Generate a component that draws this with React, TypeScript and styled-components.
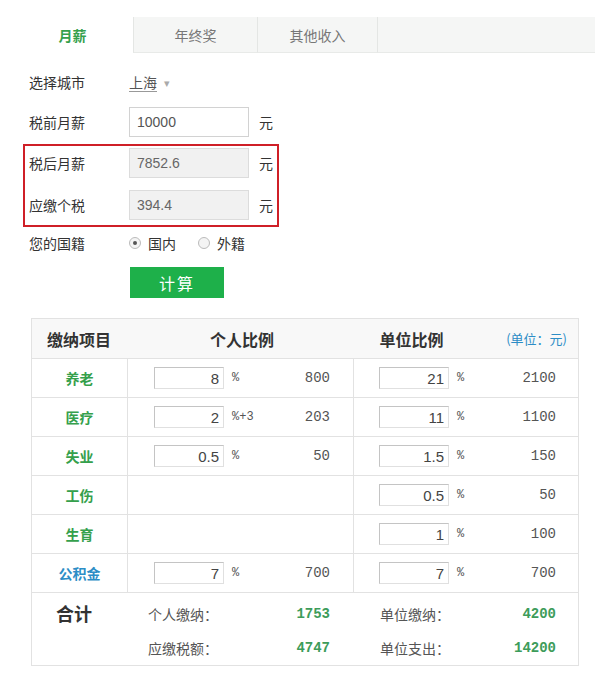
import styled, { createGlobalStyle } from "styled-components";

const GlobalStyle = createGlobalStyle`
  body {
    margin: 0;
    background: #fff;
    font-family: "Noto Sans CJK SC", sans-serif;
    color: #333;
  }
`;

const GREEN = "#35a04c";
const BLUE = "#2c8dc6";

const Page = styled.div`
  width: 600px;
  height: 681px;
  padding-top: 17px;
  box-sizing: border-box;
`;

const TabBar = styled.div`
  display: flex;
  height: 36px;
  margin: 0 5px 0 12px;
`;

const Tab = styled.div<{ $active?: boolean; $width?: number }>`
  display: flex;
  align-items: center;
  justify-content: center;
  box-sizing: border-box;
  width: ${({ $width }) => ($width ? `${$width}px` : "auto")};
  flex: ${({ $width }) => ($width ? "none" : "1")};
  font-size: 14px;
  font-weight: ${({ $active }) => ($active ? 700 : 400)};
  color: ${({ $active }) => ($active ? GREEN : "#777")};
  background: ${({ $active }) => ($active ? "#fff" : "#f5f6f5")};
  border-left: ${({ $active }) => ($active ? "none" : "1px solid #e4e6e4")};
  border-bottom: ${({ $active }) => ($active ? "none" : "1px solid #e8eae8")};
`;

const Form = styled.div`
  display: flex;
  flex-direction: column;
  align-items: flex-start;
  padding: 14px 0 0 29px;
`;

const Row = styled.div<{ $mt?: number }>`
  display: flex;
  align-items: center;
  height: 30px;
  margin-top: ${({ $mt }) => $mt ?? 0}px;
  font-size: 14px;
`;

const Label = styled.span`
  width: 100px;
  color: #333;
`;

const City = styled.span`
  color: #555;
  text-decoration: underline;
  text-decoration-color: #999;
  text-underline-offset: 3px;
`;

const Caret = styled.span`
  margin-left: 7px;
  font-size: 11px;
  color: #aaa;
`;

const Field = styled.input<{ $readonly?: boolean }>`
  width: 120px;
  height: 30px;
  box-sizing: border-box;
  padding: 0 7px;
  font-family: "Liberation Sans", Arial, sans-serif;
  font-size: 14px;
  color: ${({ $readonly }) => ($readonly ? "#666" : "#555")};
  background: ${({ $readonly }) => ($readonly ? "#f1f1f1" : "#fff")};
  border: 1px solid ${({ $readonly }) => ($readonly ? "#dcdcdc" : "#d2d2d2")};
  outline: none;
`;

const Unit = styled.span`
  margin-left: 10px;
  color: #333;
`;

const Highlight = styled.div`
  display: flex;
  flex-direction: column;
  gap: 12px;
  margin: 7px 0 0 -6px;
  padding: 2px 4px 5px 4px;
  border: 2px solid #cf1f27;
`;

const RadioGroup = styled.label`
  display: flex;
  align-items: center;
  margin-right: 22px;
  color: #333;
`;

const RadioDot = styled.span<{ $checked?: boolean }>`
  position: relative;
  width: 10px;
  height: 10px;
  margin-right: 7px;
  border-radius: 50%;
  border: 1px solid #bbb;
  background: #f4f4f4;

  &::after {
    content: "";
    display: ${({ $checked }) => ($checked ? "block" : "none")};
    position: absolute;
    left: 3px;
    top: 3px;
    width: 4px;
    height: 4px;
    border-radius: 50%;
    background: #555;
  }
`;

const CalcButton = styled.button`
  width: 94px;
  height: 31px;
  margin: 9px 0 0 101px;
  border: none;
  background: #1eb04a;
  color: #fff;
  font-family: inherit;
  font-size: 16px;
  letter-spacing: 2px;
`;

const Table = styled.div`
  width: 548px;
  margin: 20px 0 0 31px;
  box-sizing: border-box;
  border: 1px solid #e2e2e2;
`;

const HeadRow = styled.div`
  display: grid;
  grid-template-columns: 95px 226px 113px 1fr;
  align-items: center;
  height: 39px;
  background: #f8f8f8;
  border-bottom: 1px solid #e2e2e2;
`;

const HeadCell = styled.div<{ $align?: string }>`
  padding: 0 11px 0 15px;
  text-align: ${({ $align }) => $align ?? "center"};
  font-size: 16px;
  font-weight: 700;
  color: #333;
`;

const UnitNote = styled.div`
  padding-right: 11px;
  text-align: right;
  font-size: 13px;
  color: ${BLUE};
`;

const DataRow = styled.div`
  display: grid;
  grid-template-columns: 95px 226px 1fr;
  height: 38px;
  border-bottom: 1px solid #e2e2e2;
`;

const ItemName = styled.div<{ $blue?: boolean }>`
  display: flex;
  align-items: center;
  justify-content: center;
  font-size: 14px;
  font-weight: 700;
  color: ${({ $blue }) => ($blue ? BLUE : GREEN)};
`;

const RateCell = styled.div<{ $left: number; $right: number }>`
  display: flex;
  align-items: center;
  padding: 0 ${({ $right }) => $right}px 0 ${({ $left }) => $left}px;
  border-left: 1px solid #e2e2e2;
`;

const RateInput = styled.input`
  width: 70px;
  height: 22px;
  box-sizing: border-box;
  padding: 0 4px;
  text-align: right;
  font-family: "Liberation Sans", Arial, sans-serif;
  font-size: 15px;
  color: #444;
  background: #fff;
  border: 1px solid #c4c4c4;
  border-right-color: #e0e0e0;
  border-bottom-color: #e0e0e0;
  outline: none;
`;

const Percent = styled.span`
  margin-left: 8px;
  font-family: "Liberation Mono", monospace;
  font-size: 12px;
  color: #555;
`;

const Amount = styled.span`
  margin-left: auto;
  font-family: "Liberation Mono", monospace;
  font-size: 14px;
  color: #555;
`;

const Totals = styled.div`
  display: grid;
  grid-template-columns: 95px 226px 1fr;
  grid-auto-rows: 34px;
  padding-top: 4px;
`;

const TotalTitle = styled.div`
  grid-row: span 2;
  padding: 3px 0 0 24px;
  font-size: 18px;
  font-weight: 700;
  color: #333;
`;

const TotalItem = styled.div<{ $left: number; $right: number }>`
  display: flex;
  align-items: center;
  justify-content: space-between;
  padding: 0 ${({ $right }) => $right}px 0 ${({ $left }) => $left}px;
  font-size: 14px;
  color: #555;
`;

const TotalValue = styled.span`
  font-family: "Liberation Mono", monospace;
  font-size: 14px;
  font-weight: 700;
  color: #3d9c5a;
`;

interface Item {
  name: string;
  blue?: boolean;
  personal?: { rate: string; suffix: string; amount: string };
  unit: { rate: string; amount: string };
}

const items: Item[] = [
  { name: "养老", personal: { rate: "8", suffix: "%", amount: "800" }, unit: { rate: "21", amount: "2100" } },
  { name: "医疗", personal: { rate: "2", suffix: "%+3", amount: "203" }, unit: { rate: "11", amount: "1100" } },
  { name: "失业", personal: { rate: "0.5", suffix: "%", amount: "50" }, unit: { rate: "1.5", amount: "150" } },
  { name: "工伤", unit: { rate: "0.5", amount: "50" } },
  { name: "生育", unit: { rate: "1", amount: "100" } },
  { name: "公积金", blue: true, personal: { rate: "7", suffix: "%", amount: "700" }, unit: { rate: "7", amount: "700" } },
];

export default function App() {
  return (
    <Page>
      <GlobalStyle />
      <TabBar>
        <Tab $active $width={121}>月薪</Tab>
        <Tab $width={124}>年终奖</Tab>
        <Tab $width={120}>其他收入</Tab>
        <Tab />
      </TabBar>

      <Form>
        <Row>
          <Label>选择城市</Label>
          <City>上海</City>
          <Caret>▾</Caret>
        </Row>
        <Row $mt={10}>
          <Label>税前月薪</Label>
          <Field defaultValue="10000" />
          <Unit>元</Unit>
        </Row>
        <Highlight>
          <Row>
            <Label>税后月薪</Label>
            <Field $readonly readOnly defaultValue="7852.6" />
            <Unit>元</Unit>
          </Row>
          <Row>
            <Label>应缴个税</Label>
            <Field $readonly readOnly defaultValue="394.4" />
            <Unit>元</Unit>
          </Row>
        </Highlight>
        <Row $mt={1}>
          <Label>您的国籍</Label>
          <RadioGroup>
            <RadioDot $checked />
            国内
          </RadioGroup>
          <RadioGroup>
            <RadioDot />
            外籍
          </RadioGroup>
        </Row>
        <CalcButton>计算</CalcButton>
      </Form>

      <Table>
        <HeadRow>
          <HeadCell $align="left">缴纳项目</HeadCell>
          <HeadCell>个人比例</HeadCell>
          <HeadCell>单位比例</HeadCell>
          <UnitNote>(单位：元)</UnitNote>
        </HeadRow>
        {items.map((item) => (
          <DataRow key={item.name}>
            <ItemName $blue={item.blue}>{item.name}</ItemName>
            <RateCell $left={26} $right={23}>
              {item.personal && (
                <>
                  <RateInput defaultValue={item.personal.rate} />
                  <Percent>{item.personal.suffix}</Percent>
                  <Amount>{item.personal.amount}</Amount>
                </>
              )}
            </RateCell>
            <RateCell $left={25} $right={22}>
              <RateInput defaultValue={item.unit.rate} />
              <Percent>%</Percent>
              <Amount>{item.unit.amount}</Amount>
            </RateCell>
          </DataRow>
        ))}
        <Totals>
          <TotalTitle>合计</TotalTitle>
          <TotalItem $left={21} $right={23}>
            个人缴纳：<TotalValue>1753</TotalValue>
          </TotalItem>
          <TotalItem $left={27} $right={22}>
            单位缴纳：<TotalValue>4200</TotalValue>
          </TotalItem>
          <TotalItem $left={21} $right={23}>
            应缴税额：<TotalValue>4747</TotalValue>
          </TotalItem>
          <TotalItem $left={27} $right={22}>
            单位支出：<TotalValue>14200</TotalValue>
          </TotalItem>
        </Totals>
      </Table>
    </Page>
  );
}
